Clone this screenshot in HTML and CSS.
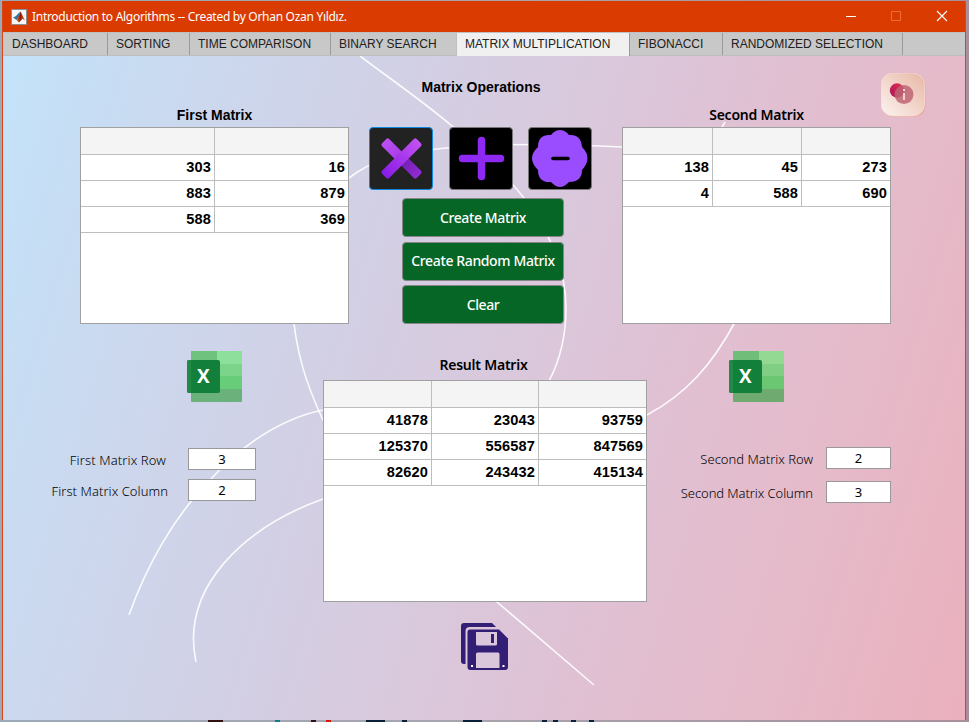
FILE: index.html
```html
<!DOCTYPE html>
<html lang="en">
<head>
<meta charset="utf-8">
<title>Introduction to Algorithms</title>
<link rel="stylesheet" href="styles.css">
</head>
<body>
<div class="window">
  <header class="titlebar">
    <svg class="app-icon" width="16" height="16" viewBox="0 0 16 16"><defs><linearGradient id="lg" x2="1" y2="0"><stop offset="0" stop-color="#e67b25"/><stop offset=".45" stop-color="#8c1b0c"/><stop offset="1" stop-color="#e86b1c"/></linearGradient></defs><rect x=".5" y=".5" width="15" height="15" fill="#f4f6f8" stroke="#8c8f96"/><path d="M2 8.5 5 7 9 2.5 7.5 10 5.5 11z" fill="#2e75ad"/><path d="M5.5 11 7.5 7 9.6 2.4 14 11.5 11.5 9.8 8 13.5z" fill="url(#lg)"/></svg>
    <span class="caption">Introduction to Algorithms -- Created by Orhan Ozan Yıldız.</span>
    <svg class="controls" width="110" height="14" viewBox="0 0 110 14" fill="none"><path d="M1 6.500h10" stroke="#fff"/><rect x="46.5" y="1.500" width="9" height="9" stroke="#ee6a3a"/><path d="m92 1 10 10m0-10-10 10" stroke="#fff" stroke-width="1.2"/></svg>
  </header>
  <nav class="tabs">
    <span class="tab t1"><b>DASHBOARD</b></span><span class="tab t2"><b>SORTING</b></span><span class="tab t3"><b>TIME COMPARISON</b></span><span class="tab t4"><b>BINARY SEARCH</b></span><span class="tab t5 active"><b>MATRIX MULTIPLICATION</b></span><span class="tab t6"><b>FIBONACCI</b></span><span class="tab t7"><b>RANDOMIZED SELECTION</b></span>
  </nav>
  <main class="canvas">
    <svg class="curves" viewBox="3 56 962 663" fill="none" stroke="#fff" stroke-opacity=".9" stroke-width="1.6">
      <path d="M360 56C400 86 425 103 452 126C478 148 500 168 524 198C548 230 566 267 566 308C566 338 559 362 549 381"/>
      <path d="M622 147C530 142 440 144 390 157C325 177 292 240 292 305C296 355 307 385 322 418C350 475 430 550 497 602L594 685"/>
      <path d="M725 122 721 129M735 322C712 365 686 394 647 415"/>
      <path d="M323 410C268 421 226 462 211 479C174 516 146 567 129 615"/>
      <path d="M323 499C245 527 180 587 196 662"/>
    </svg>
    <div class="heading">
      <h1><span>Matrix Operations</span></h1>
      <svg class="info" width="46" height="46" viewBox="0 0 46 46"><defs><linearGradient id="ig" x1="0" y1="1" x2="1" y2="0"><stop stop-color="#fcf3ef"/><stop offset="1" stop-color="#e8b7a5"/></linearGradient><linearGradient id="rg" x1="0" y1="1" x2="1" y2="0"><stop stop-color="#a31958"/><stop offset="1" stop-color="#ea2c52"/></linearGradient></defs><rect x="1" y="1" width="43.500" height="43" rx="12" fill="#e7a998"/><rect x="0" y="0" width="43.500" height="43" rx="12" fill="url(#ig)" stroke="#f5dcd6" stroke-width=".8"/><circle cx="16" cy="17.500" r="7.200" fill="url(#rg)"/><circle cx="23" cy="21.500" r="9.500" fill="#bd6474" fill-opacity=".84"/><path d="M23 20v7M23 16v2" stroke="#f7cfcf" stroke-width="2"/></svg>
    </div>
    <section class="upper">
      <div class="matrix">
        <h2 class="arial"><span>First Matrix</span></h2>
        <div class="sheet small">
          <div class="cells two"><i></i><i></i><b>303</b><b>16</b><b>883</b><b>879</b><b>588</b><b>369</b></div>
        </div>
      </div>
      <div class="actions">
        <div class="ops">
          <svg class="op current" viewBox="0 0 62 61"><defs><linearGradient id="xg"><stop stop-color="#881be5"/><stop offset="1" stop-color="#c252f0"/></linearGradient><linearGradient id="xd"><stop stop-color="#bc50f2"/><stop offset=".5" stop-color="#a53ae8"/><stop offset=".62" stop-color="#7620b5"/><stop offset="1" stop-color="#942bd6"/></linearGradient></defs><rect x="-24.500" y="-5" width="49" height="10" rx="2" transform="translate(31.500 30.500) rotate(45)" fill="url(#xd)"/><rect x="-24.500" y="-5" width="49" height="10" rx="2" transform="translate(31.500 30.500) rotate(-45)" fill="url(#xg)"/></svg>
          <svg class="op" viewBox="0 0 62 61"><path d="M31.500 12.500v36M12.500 30.500h38" stroke="#8d29f3" stroke-width="7.500" stroke-linecap="round"/></svg>
          <svg class="op" viewBox="0 0 62 61"><path d="M31 2Q36 2 40 7Q52 6 53 19Q64 30 53 42Q53 54 40 54Q31 64 22 54Q9 55 9 42Q-3 30 9 19Q9 6 22 7Q26 2 31 2z" fill="#994dff"/><path d="M24 30.500h15" stroke="#000" stroke-width="3.600" stroke-linecap="round"/></svg>
        </div>
        <div class="buttons">
          <button><span class="create">Create Matrix</span></button>
          <button><span class="random">Create Random Matrix</span></button>
          <button><span class="clear">Clear</span></button>
        </div>
      </div>
      <div class="matrix">
        <h2><span class="second">Second Matrix</span></h2>
        <div class="sheet small">
          <div class="cells three"><i></i><i></i><i></i><b>138</b><b>45</b><b>273</b><b>4</b><b>588</b><b>690</b></div>
        </div>
      </div>
    </section>
    <section class="lower">
      <div class="side first">
        <svg class="excel" width="56" height="54" viewBox="0 0 56 54"><rect x="4" y="1" width="51" height="51" rx="1.500" fill="#72ce83"/><path d="M4 1h26v13H4z" fill="#6fc17e"/><path d="M30 1h25v13H30z" fill="#8fdf9c"/><path d="M30 14h25v12H30z" fill="#7cd48b"/><path d="M30 26h25v13H30z" fill="#68cd78"/><path d="M4 39h51v11.500q0 1.500-1.500 1.500h-48Q4 52 4 50.500z" fill="#6bb17c"/><rect x="0" y="10" width="33" height="33" rx="2" fill="#12803a"/><path d="M2 10H4V43H2Q0 43 0 41V12Q0 10 2 10z" fill="#208b48"/><text x="16.300" y="33" class="x-mark">X</text></svg>
        <label class="field"><span><em class="fr">First Matrix Row</em></span><output>3</output></label>
        <label class="field"><span><em class="fc">First Matrix Column</em></span><output>2</output></label>
      </div>
      <div class="result">
        <h2><span class="res">Result Matrix</span></h2>
        <div class="sheet large">
          <div class="cells wide"><i></i><i></i><i></i><b>41878</b><b>23043</b><b>93759</b><b>125370</b><b>556587</b><b>847569</b><b>82620</b><b>243432</b><b>415134</b></div>
        </div>
        <svg class="save" width="48" height="48" viewBox="0 0 48 48"><path d="M3 0H31L35 4H9Q4.500 4 4.500 8V41H3Q0 41 0 38V3Q0 0 3 0z" fill="#321e75"/><path d="M9 6.500H38L47 15.500V44Q47 47 44 47H9.500Q6.500 47 6.500 44V9Q6.500 6.500 9 6.500z" fill="#321e75"/><path d="M15 9H36V21Q36 22.500 34.500 22.500H16.500Q15 22.500 15 21zM15 45V31Q15 29.500 16.500 29.500H37Q38.500 29.500 38.500 31V45z" fill="#dac7db"/><path d="M30 11h3v9h-3z" fill="#321e75"/><path d="M10 42h2v2h-2zM41.500 42h2v2h-2z" fill="#fff"/></svg>
      </div>
      <div class="side last">
        <svg class="excel" width="56" height="54" viewBox="0 0 56 54"><rect x="4" y="1" width="51" height="51" rx="1.500" fill="#72c779"/><path d="M4 1h26v13H4z" fill="#70bd7a"/><path d="M30 1h25v13H30z" fill="#93d994"/><path d="M30 14h25v12H30z" fill="#7fce83"/><path d="M30 26h25v13H30z" fill="#6cc773"/><path d="M4 39h51v11.500q0 1.500-1.500 1.500h-48Q4 52 4 50.500z" fill="#6fab71"/><rect x="0" y="10" width="33" height="33" rx="2" fill="#12803a"/><path d="M2 10H4V43H2Q0 43 0 41V12Q0 10 2 10z" fill="#208b48"/><text x="16.300" y="33" class="x-mark">X</text></svg>
        <label class="field"><span><em class="sr">Second Matrix Row</em></span><output>2</output></label>
        <label class="field"><span><em class="sc">Second Matrix Column</em></span><output>3</output></label>
      </div>
    </section>
  </main>
</div>
<svg class="backdrop" width="969" height="2" viewBox="0 0 969 2"><path d="M208 0h15v2h-15zM311 0h5v2h-5z" fill="#321011"/><path d="M275 0h5v2h-5z" fill="#117b87"/><path d="M326 0h5v2h-5z" fill="#d8150c"/><path d="M366 0h19v2h-19zM402 0h5v2h-5zM463 0h19v2h-19zM542 0h5v2h-5zM553 0h5v2h-5zM571 0h5v2h-5zM589 0h5v2h-5z" fill="#082139"/></svg>
</body>
</html>
```
FILE: styles.css
```css
* { box-sizing: border-box; }
body { margin: 0; height: 722px; overflow: hidden; padding: 1px 3px 0 2px; background: linear-gradient(90deg, #9ba9b8, #a7a3ad 50%, #a88f9b); font-family: "Liberation Sans", Arial, sans-serif; color: #000; }
.window { width: 964px; height: 719px; border: 1px solid #dc4616; border-top: 0; }
.titlebar { height: 31px; background: #da3b01; display: flex; align-items: center; padding: 0 10px 0 8px; }
.app-icon { flex: none; }
.caption { font: 12px/20px "Noto Sans", sans-serif; color: #fff; margin-left: 5px; white-space: nowrap; letter-spacing: -.29px; }
.controls { margin-left: auto; }
.tabs { display: flex; height: 24px; background: #c8c8c8; border-top: 1px solid #c0c0c0; border-bottom: 1px solid #bdbdbd; }
.tab { border-right: 1px solid #9a9a9a; padding-left: 9px; font-size: 12px; line-height: 22px; white-space: nowrap; color: #202020; }
.tab b { font-weight: 400; }
.t1 { width: 105px; }
.t2 { width: 82px; }
.t3 { width: 141px; }
.t4 { width: 126px; border-right-color: #c0c0c0; }
.t5 { width: 173px; }
.t6 { width: 93px; }
.t7 { width: 180px; }
.active { background: #f0f0f0; height: 23px; }
.tab:not(.t1) { padding-left: 8px; }
.canvas { position: relative; height: 664px; background: linear-gradient(107deg, #c3e3fa 0%, #cbd8ee 18%, #d1d1e6 33%, #dac8dc 52%, #e0c0d3 66%, #e5bac9 82%, #ebb0bd 100%); }
.curves { position: absolute; left: 0; top: 0; width: 962px; height: 663px; }
.heading, .upper, .lower { position: relative; }
.heading { display: grid; grid-template-columns: 78px 800px 46px; height: 49px; padding-top: 17px; }
h1, h2 { margin: 0; font-size: 14px; text-align: center; white-space: nowrap; }
h1 { grid-column: 2; line-height: 29px; }
h2 { height: 22px; font: 600 14px/20px "Noto Sans", sans-serif; letter-spacing: -.23px; }
h2.arial { font: bold 14px/20px "Liberation Sans", sans-serif; letter-spacing: 0; }
.upper { display: grid; grid-template-columns: 269px 223px 269px; column-gap: 20px; padding-left: 77px; height: 219px; }
.upper .matrix:last-child { margin-left: 10px; width: 269px; }
.sheet { background: #fff; border: 1px solid #a0a0a0; }
.small { height: 197px; }
.large { height: 222px; }
.cells { display: grid; grid-auto-rows: 26px; }
.cells i, .cells b { border-right: 1px solid #bdbdbd; border-bottom: 1px solid #bdbdbd; }
.cells i { background: #f4f4f4; height: 27px; }
.cells b { text-align: right; font-size: 14.600px; line-height: 24px; padding-right: 3px; letter-spacing: .15px; }
.two { grid-template-columns: 134px 133px; grid-template-rows: 27px; }
.three { grid-template-columns: 90px 89px 88px; grid-template-rows: 27px; }
.wide { grid-template-columns: 108px 107px 107px; grid-template-rows: 27px; }
.two > :nth-child(2n), .three > :nth-child(3n), .wide > :nth-child(3n) { border-right: 0; }
.actions { padding-top: 22px; }
.ops { display: flex; justify-content: space-between; height: 63px; }
.op { width: 64px; height: 63px; background: #000; border: 1px solid #777; border-radius: 4px; }
.current { background: #222; border-color: #0e89df; }
.buttons { display: grid; grid-template-rows: 39px 39px 39px; row-gap: 4.500px; margin: 8px 0 0 33px; width: 162px; }
button { background: #056625; border: 1px solid #85858a; border-radius: 4px; padding: 0; color: #fff; font: 500 14px/36px "Noto Sans", sans-serif; letter-spacing: -.38px; white-space: nowrap; }
.lower { display: grid; grid-template-columns: 320px 324px 318px; }
.side { padding-top: 26px; display: flex; flex-direction: column; align-items: flex-start; }
.excel { display: block; margin: 0 0 44px 184px; }
.last .excel { margin: 0 0 43px 82px; }
.x-mark { font: bold 19px "Open Sans", sans-serif; fill: #fff; text-anchor: middle; }
.field { display: flex; height: 22px; margin-bottom: 9px; }
.field span { width: 165px; padding-right: 0; margin-right: 20px; text-align: right; font: 300 13px/25px "Noto Sans", sans-serif; white-space: nowrap; }
.first .field:nth-of-type(1) span { padding-right: 2px; }
.last .field { margin-bottom: 12px; }
.last .field span { margin-right: 13px; width: 166px; }
em { font-style: normal; }
.fr { letter-spacing: .12px; }
.fc { letter-spacing: .06px; }
.sc { letter-spacing: -.08px; }
output { width: 68px; height: 22px; background: #fff; border: 1px solid #999; text-align: center; font: 13px/20px "Noto Sans", sans-serif; }
.last output { width: 65px; }
.result h2 { height: 56px; line-height: 82px; padding-right: 3px; }
.save { display: block; margin: 21px 0 0 138px; }
.backdrop { display: block; margin-left: -2px; }
```
